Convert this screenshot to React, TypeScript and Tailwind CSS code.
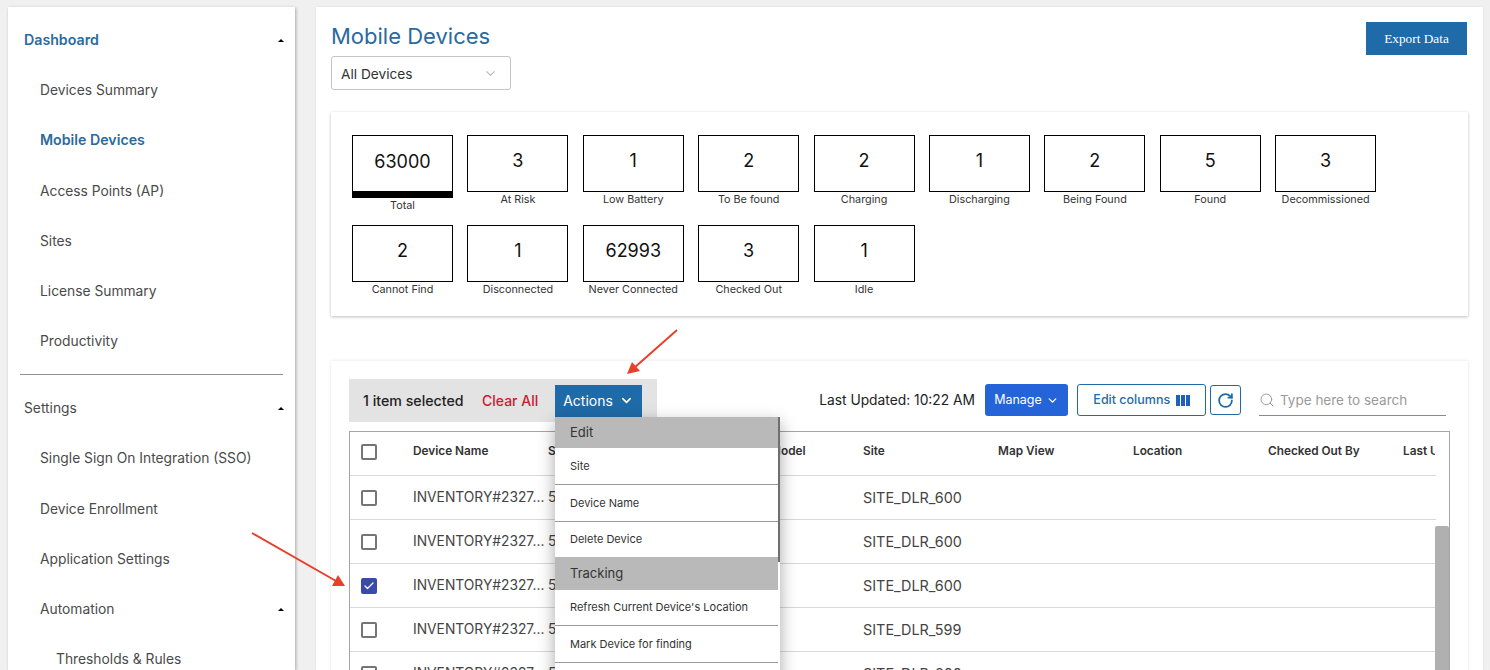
import { ChevronDown, Check, RotateCw, Search } from "lucide-react";

const dashItems = ["Devices Summary", "Mobile Devices", "Access Points (AP)", "Sites", "License Summary", "Productivity"];
const settingsItems = ["Single Sign On Integration (SSO)", "Device Enrollment", "Application Settings"];

const stats = [
  ["63000", "Total"],
  ["3", "At Risk"],
  ["1", "Low Battery"],
  ["2", "To Be found"],
  ["2", "Charging"],
  ["1", "Discharging"],
  ["2", "Being Found"],
  ["5", "Found"],
  ["3", "Decommissioned"],
  ["2", "Cannot Find"],
  ["1", "Disconnected"],
  ["62993", "Never Connected"],
  ["3", "Checked Out"],
  ["1", "Idle"],
];

const rows = ["SITE_DLR_600", "SITE_DLR_600", "SITE_DLR_600", "SITE_DLR_599", "SITE_DLR_600"];
const cols = "grid grid-cols-[63px_135px_180px_135px_135px_135px_135px_135px_32px]";

function Caret() {
  return <span className="h-0 w-0 border-x-[3px] border-b-[3px] border-x-transparent border-b-black" />;
}

function NavRow({ label, active, indent }: { label: string; active?: boolean; indent: string }) {
  return (
    <div className={`flex h-[50.25px] items-center ${indent} ${active ? "pb-[2px] text-[14.2px] font-semibold text-[#2a6a9e]" : "text-[13.8px] text-[#4a4a4a]"}`}>
      {label}
    </div>
  );
}

function Sidebar() {
  return (
    <aside className="h-[663px] w-[287px] shrink-0 overflow-hidden bg-white pt-[8px] shadow-[1px_1px_3px_rgba(0,0,0,0.3)]">
      <div className="flex h-[50.25px] items-center justify-between pl-4 pr-[11px] text-[14.2px] font-semibold text-[#2a6a9e]">
        Dashboard
        <Caret />
      </div>
      {dashItems.map((item) => (
        <NavRow key={item} label={item} indent="pl-8" active={item === "Mobile Devices"} />
      ))}
      <div className="mx-3 mt-[7.5px] border-t border-[#8f8f8f]" />
      <div className="mt-[8px] flex h-[50.25px] items-center justify-between pl-4 pr-[11px] text-[13.8px] text-[#4a4a4a]">
        Settings
        <Caret />
      </div>
      {settingsItems.map((item) => (
        <NavRow key={item} label={item} indent="pl-8" />
      ))}
      <div className="flex h-[50.25px] items-center justify-between pl-8 pr-[11px] text-[13.8px] text-[#4a4a4a]">
        Automation
        <Caret />
      </div>
      <NavRow label="Thresholds & Rules" indent="pl-12" />
    </aside>
  );
}

function Stat({ value, label, first }: { value: string; label: string; first?: boolean }) {
  return (
    <div className="flex w-[101px] flex-col items-center">
      <div className={`flex w-full items-center justify-center border border-black bg-white text-[18px] text-[#111] ${first ? "h-[63px] border-b-[7px] pb-[5px]" : "h-[56.5px] pb-[5px]"}`}>
        {value}
      </div>
      <div className="text-[10.8px] leading-[15px] text-[#333]">{label}</div>
    </div>
  );
}

function Box({ checked }: { checked?: boolean }) {
  if (checked) {
    return (
      <span className="flex h-4 w-4 items-center justify-center rounded-[2px] bg-[#3a4aa8]">
        <Check size={12} strokeWidth={2.5} className="text-white" />
      </span>
    );
  }
  return <span className="block h-4 w-4 rounded-[2px] border-2 border-[#757575]" />;
}

function ActionsMenu() {
  return (
    <div className="absolute left-0 top-full z-10 h-[300px] w-[225px] bg-white shadow-[0_6px_16px_rgba(0,0,0,0.35)]">
      <div className="absolute right-0 top-0 h-[145px] w-[2px] bg-[#6f6f6f]" />
      <div className="mr-[2px]">
        <div className="flex h-[31px] items-center bg-[#b9b9b9] px-[15px] pt-[2px] text-[13px] text-[#333]">Edit</div>
        <div className="flex h-[37px] items-center border-b border-[#9a9a9a] px-[15px] pt-[2px] text-[11px] text-[#333]">Site</div>
        <div className="flex h-[37px] items-center border-b border-[#9a9a9a] px-[15px] pt-[2px] text-[11px] text-[#333]">Device Name</div>
        <div className="flex h-[35px] items-center px-[15px] text-[11px] text-[#333]">Delete Device</div>
        <div className="flex h-[33px] items-center bg-[#b9b9b9] px-[15px] pt-[2px] text-[13px] text-[#333]">Tracking</div>
        <div className="flex h-[36px] items-center border-b border-[#9a9a9a] px-[15px] text-[11px] text-[#333]">Refresh Current Device's Location</div>
        <div className="flex h-[37px] items-center border-b border-[#9a9a9a] px-[15px] pt-[2px] text-[11px] text-[#333]">Mark Device for finding</div>
      </div>
    </div>
  );
}

function Toolbar() {
  return (
    <div className="flex h-[43px] items-center justify-between">
      <div className="flex h-full w-[308px] items-center bg-[#e3e3e3] pl-[14px]">
        <span className="w-[119px] text-[14.2px] font-medium text-[#222]">1 item selected</span>
        <span className="w-[73px] text-[14px] font-medium text-[#c8202f]">Clear All</span>
        <div className="relative">
          <button className="flex h-[32px] w-[87px] items-center justify-center gap-[6px] bg-[#1f6aa8] text-[14px] text-white">
            Actions
            <ChevronDown size={15} strokeWidth={2.5} />
          </button>
          <ActionsMenu />
        </div>
      </div>
      <div className="flex items-center pb-[1px]">
        <span className="mr-[10px] pt-px text-[13.8px] text-[#222]">Last Updated: 10:22 AM</span>
        <button className="flex h-[32px] w-[83px] items-center justify-center gap-[4px] rounded-[3px] bg-[#2563d9] text-[12.5px] text-white">
          Manage
          <ChevronDown size={13} strokeWidth={2.5} />
        </button>
        <button className="ml-[9px] flex h-[32px] w-[129px] items-center justify-center gap-[6px] rounded-[3px] border border-[#1f6aa8] text-[12.5px] font-medium text-[#1f6aa8]">
          Edit columns
          <span className="flex gap-[1.5px]">
            <span className="h-[11px] w-[3.5px] bg-[#1f5fc0]" />
            <span className="h-[11px] w-[3.5px] bg-[#1f5fc0]" />
            <span className="h-[11px] w-[3.5px] bg-[#1f5fc0]" />
          </span>
        </button>
        <button className="ml-[4px] flex h-[30px] w-[31px] items-center justify-center rounded-[3px] border border-[#1f6aa8] text-[#1f6aa8]">
          <RotateCw size={17} strokeWidth={2.5} />
        </button>
        <div className="ml-[18px] flex h-[31px] w-[187px] items-center gap-[5px] border-b border-[#8a8a8a] pt-px">
          <Search size={16} strokeWidth={1.5} className="text-[#9a9a9a]" />
          <span className="text-[13.5px] text-[#9a9a9a]">Type here to search</span>
        </div>
      </div>
    </div>
  );
}

function DeviceTable() {
  return (
    <div className="relative mt-[9px] w-[1101px] overflow-hidden border border-[#a5a5a5]">
      <div className="absolute right-0 top-[94px] h-[300px] w-[14px] rounded-t-[2px] bg-[#b0b0b0]" />
      <div className={`${cols} h-[44px] w-[1086px] items-center overflow-hidden border-b border-[#d9d9d9] pb-[4px] text-[11.8px] font-semibold text-[#333]`}>
        <div className="pl-[11px]">
          <Box />
        </div>
        <div>Device Name</div>
        <div>S</div>
        <div>Device Model</div>
        <div>Site</div>
        <div>Map View</div>
        <div>Location</div>
        <div>Checked Out By</div>
        <div className="overflow-hidden whitespace-nowrap">Last U</div>
      </div>
      {rows.map((site, i) => (
        <div key={i} className={`${cols} h-[44px] w-[1086px] items-center border-b border-[#d9d9d9] text-[#444]`}>
          <div className="pl-[11px]">
            <Box checked={i === 2} />
          </div>
          <div className="whitespace-nowrap text-[13.8px]">INVENTORY#2327...</div>
          <div className="text-[13.8px]">5</div>
          <div />
          <div className="whitespace-nowrap text-[14.4px]">{site}</div>
        </div>
      ))}
    </div>
  );
}

export default function App() {
  return (
    <div className="relative h-[670px] w-[1490px] overflow-hidden bg-[#f0f0f0] font-['Inter',sans-serif]">
      <div className="flex pl-2 pt-[7px]">
        <Sidebar />
        <main className="ml-[21px] h-[663px] w-[1167px] shrink-0 bg-white pl-[15px] pr-[15px] shadow-[0_0_2px_rgba(0,0,0,0.1)]">
          <div className="flex justify-between">
            <div>
              <h1 className="mt-[15px] text-[22px] leading-[29px] text-[#2a6a9e]">Mobile Devices</h1>
              <div className="mt-[5px] flex h-[34px] w-[180px] items-center justify-between rounded-[3px] border border-[#c4c4c4] pl-[9px] pr-[12px] text-[13.7px] text-[#333]">
                <span className="pt-[2px]">All Devices</span>
                <ChevronDown size={15} className="text-[#bbb]" />
              </div>
            </div>
            <button className="mr-px mt-[15px] h-[33px] w-[101px] bg-[#1f6aa8] font-['Liberation_Serif',serif] text-[13.3px] text-white">
              Export Data
            </button>
          </div>
          <section className="mt-[22px] h-[204px] w-[1137px] bg-white pl-[21px] pt-[23px] shadow-[0_1px_3px_rgba(0,0,0,0.25)]">
            <div className="grid grid-cols-[repeat(9,101px)] gap-x-[14.4px]">
              {stats.map(([value, label], i) => (
                <div key={label} className={i < 9 ? "h-[90px]" : ""}>
                  <Stat value={value} label={label} first={i === 0} />
                </div>
              ))}
            </div>
          </section>
          <section className="mt-[45px] h-[320px] w-[1137px] bg-white pl-[18px] pt-[18px] shadow-[0_0_3px_rgba(0,0,0,0.12)]">
            <div className="w-[1097px]">
              <Toolbar />
            </div>
            <DeviceTable />
          </section>
        </main>
      </div>
      <svg className="pointer-events-none absolute inset-0 z-20" width="1490" height="670">
        <line x1="677" y1="330" x2="634" y2="368" stroke="#e8402a" strokeWidth="2" />
        <polygon points="627,374 632,362 640,371" fill="#e8402a" />
        <line x1="252" y1="533" x2="336" y2="581" stroke="#e8402a" strokeWidth="2" />
        <polygon points="345,586 332,586 338,575" fill="#e8402a" />
      </svg>
    </div>
  );
}
